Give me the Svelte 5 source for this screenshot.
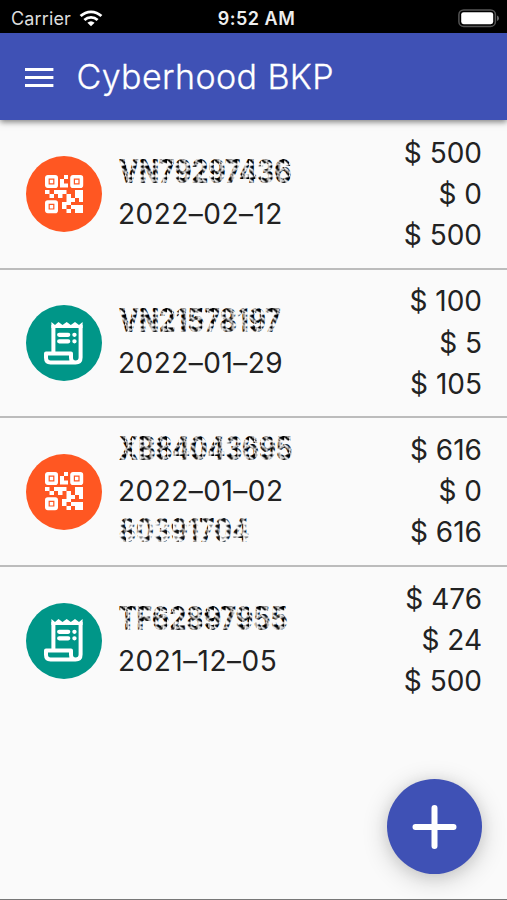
<script>
  const rows = [
    { kind: 'qr', id: 'VN79297436', width: 177, date: '2022–02–12', amounts: ['$ 500', '$ 0', '$ 500'] },
    { kind: 'bill', id: 'VN21578197', width: 166, date: '2022–01–29', amounts: ['$ 100', '$ 5', '$ 105'] },
    { kind: 'qr', id: 'XB84043695', width: 178, date: '2022–01–02', extra: '80391704', extraWidth: 134, amounts: ['$ 616', '$ 0', '$ 616'] },
    { kind: 'bill', id: 'TF62897955', width: 173, date: '2021–12–05', amounts: ['$ 476', '$ 24', '$ 500'] }
  ];
</script>

{#snippet scrambled(text, width, faded)}
  <svg class="code" width="185" height="42" viewBox="0 0 185 42">
    <text x="-1.5" y="30.5" textLength={width} lengthAdjust="spacingAndGlyphs" fill={faded ? 'url(#chips-soft)' : 'url(#chips)'}>{text}</text>
  </svg>
{/snippet}

<div class="screen">
  <svg class="defs" width="0" height="0">
    <defs>
      <pattern id="chips" width="12" height="12" patternUnits="userSpaceOnUse">
        <path d="M0 2L6 0V6ZM6 8L12 5V11ZM8 2L12 0V4ZM0 7L5 6L5 12Z" fill="#000" />
        <path d="M6 3L8 5L6 7L4 5ZM0 4L2 6L0 8ZM5 9L8 10L7 12Z" fill="#222" />
        <path d="M6 0H8V4H6ZM2 5L6 7L4 9ZM9 4L12 5L9 7Z" fill="#aaa" />
      </pattern>
      <pattern id="chips-soft" width="12" height="12" patternUnits="userSpaceOnUse">
        <path d="M0 2L6 0V6ZM6 8L12 5V11ZM0 7L5 6L5 12Z" fill="#111" />
        <path d="M7 1H12L9 4ZM3 5L7 7L5 10Z" fill="#888" />
      </pattern>
    </defs>
  </svg>

  <div class="status">
    <div class="carrier">
      <span>Carrier</span>
      <svg width="24" height="17" viewBox="0 0 24 17" fill="none" stroke="#fff" stroke-width="2.8">
        <path d="M1.6 6.1C7.5.4 16.5.4 22.4 6.1" />
        <path d="M5.4 10C9.2 6.4 14.8 6.4 18.6 10" />
        <path d="M8.4 12.7Q12 9.6 15.6 12.7L12 16.3Z" fill="#fff" stroke="none" />
      </svg>
    </div>
    <div class="time">9:52 AM</div>
    <svg class="battery" width="42" height="19" viewBox="0 0 42 19">
      <rect x=".9" y=".9" width="36.5" height="16.6" rx="4.8" fill="none" stroke="#555" stroke-width="1.5" />
      <rect x="3.2" y="3.2" width="32" height="12" rx="2.4" fill="#fff" />
      <path d="M39 6.5Q41 7.2 41 9.2T39 11.9Z" fill="#666" />
    </svg>
  </div>

  <header>
    <svg width="30" height="22" viewBox="0 0 30 22" stroke="#fff" stroke-width="3" fill="none">
      <path d="M1 3.5H29.4M1 11.5H29.4M1 19.5H29.4" />
    </svg>
    <h1>Cyberhood BKP</h1>
  </header>

  <main>
    {#each rows as row}
      <div class="row">
        <div class="avatar {row.kind}">
          {#if row.kind === 'qr'}
            <svg width="39" height="39" viewBox="0 0 39 39" fill="#fff">
              <g fill="none" stroke="#fff" stroke-width="3.6">
                <rect x="1.8" y="1.8" width="9.4" height="9.4" rx="1" />
                <rect x="27" y="1.8" width="9.4" height="9.4" rx="1" />
                <rect x="1.8" y="27" width="9.4" height="9.4" rx="1" />
              </g>
              <path d="M4.8 4.8H8.2V8.2H4.8ZM30 4.8H33.4V8.2H30ZM4.8 30H8.2V33.4H4.8Z" />
              <path d="M19 0H23V4H19ZM15 4H19V8.5H23V12.5H15ZM0 15H4.5V19H0ZM4.5 19H9V23H4.5ZM9 15H21.5V19H17.5V23H13V19H9ZM21.5 19H26V23H30V19H34V15H38V27H34V23H30V27H26V30H38V34H34V38H30V34H26V30H21.5V34H17V27H21.5Z" />
              <path d="M21.5 34H26V38H21.5ZM30 15H34V19H30ZM34 34H38V38H34Z" />
            </svg>
          {:else}
            <svg width="40" height="43" viewBox="0 0 40 43" fill="none" stroke="#fff" stroke-width="4">
              <path d="M9.4 30V3M36.6 3V35.5Q36.6 40.5 31.5 40.5H6.5Q2 40.5 2 35.8V31.5H27V35.8Q27 40.5 31.5 40.5" stroke-linejoin="round" />
              <path d="M7.4 0L11 3L14.5 0L18.5 3L22.7 0L26.8 3L31 0L35 3L38.6 0V6H7.4Z" fill="#fff" stroke="none" />
              <path d="M15.2 12.8H24.2M15.2 19.3H24.2M30.4 12.8H30.5M30.4 19.3H30.5" stroke-width="4.3" stroke-linecap="round" />
            </svg>
          {/if}
        </div>
        <div class="details">
          {@render scrambled(row.id, row.width, false)}
          <div class="date">{row.date}</div>
          {#if row.extra}{@render scrambled(row.extra, row.extraWidth, true)}{/if}
        </div>
        <div class="amounts">
          {#each row.amounts as amount}<div>{amount}</div>{/each}
        </div>
      </div>
    {/each}
  </main>

  <button class="fab" aria-label="Add">
    <svg width="46" height="46" viewBox="0 0 46 46" stroke="#fff" stroke-width="6" stroke-linecap="round"><path d="M22.5 4V42M3.5 23H41.5" /></svg>
  </button>
</div>

<style>
  :global(body) { margin: 0; }
  .screen {
    position: relative;
    box-sizing: border-box;
    width: 507px;
    height: 900px;
    overflow: hidden;
    background: #fafafa;
    border-bottom: 1px solid #777;
    color: #222;
    font-family: Inter, "Liberation Sans", sans-serif;
    display: flex;
    flex-direction: column;
  }
  .defs { position: absolute; }
  .status {
    flex: none;
    height: 33px;
    background: #000;
    color: #fff;
    display: grid;
    grid-template-columns: 1fr auto 1fr;
    align-items: center;
    padding: 3px 7px 0 11px;
    box-sizing: border-box;
    font-size: 18px;
  }
  .carrier { display: flex; align-items: center; gap: 8px; color: #ddd; letter-spacing: .15px; }
  .time { font-weight: 600; letter-spacing: .5px; color: #eee; margin-right: -2px; }
  .battery { justify-self: end; }
  header {
    flex: none;
    height: 87px;
    box-sizing: border-box;
    padding: 0 24px;
    display: flex;
    align-items: center;
    gap: 22.5px;
    background: #3f51b5;
    color: #fff;
    box-shadow: 0 2px 6px rgba(0, 0, 0, .5);
  }
  h1 { margin: 0; font-size: 34px; font-weight: 300; letter-spacing: .4px; line-height: 44px; white-space: nowrap; -webkit-text-stroke: .3px #fff; }
  main { display: flex; flex-direction: column; padding-top: 1.1px; }
  .row {
    box-sizing: border-box;
    height: 148.7px;
    padding: 0 25px 0 26px;
    display: flex;
    align-items: center;
    border-bottom: 2px solid #bcbcbc;
  }
  .row:last-child { border-bottom-color: transparent; }
  .avatar {
    width: 76px;
    height: 76px;
    border-radius: 50%;
    display: flex;
    align-items: center;
    justify-content: center;
    flex: none;
  }
  .qr { background: #ff5722; }
  .bill { background: #009688; }
  .details { margin-left: 16px; flex: 1; font-size: 28px; line-height: 41px; }
  .code { display: block; height: 41px; overflow: visible; font-weight: 800; font-size: 33px; }
  .date { letter-spacing: .48px; white-space: nowrap; }
  .amounts { text-align: right; font-size: 28px; line-height: 41.2px; white-space: nowrap; }
  .fab {
    position: absolute;
    right: 25px;
    bottom: 25px;
    width: 95px;
    height: 95px;
    padding: 0;
    border: 0;
    border-radius: 50%;
    background: #3f51b5;
    display: flex;
    align-items: center;
    justify-content: center;
    box-shadow: 0 5px 26px rgba(0, 0, 0, .2), 0 2px 14px rgba(0, 0, 0, .08);
  }
</style>
